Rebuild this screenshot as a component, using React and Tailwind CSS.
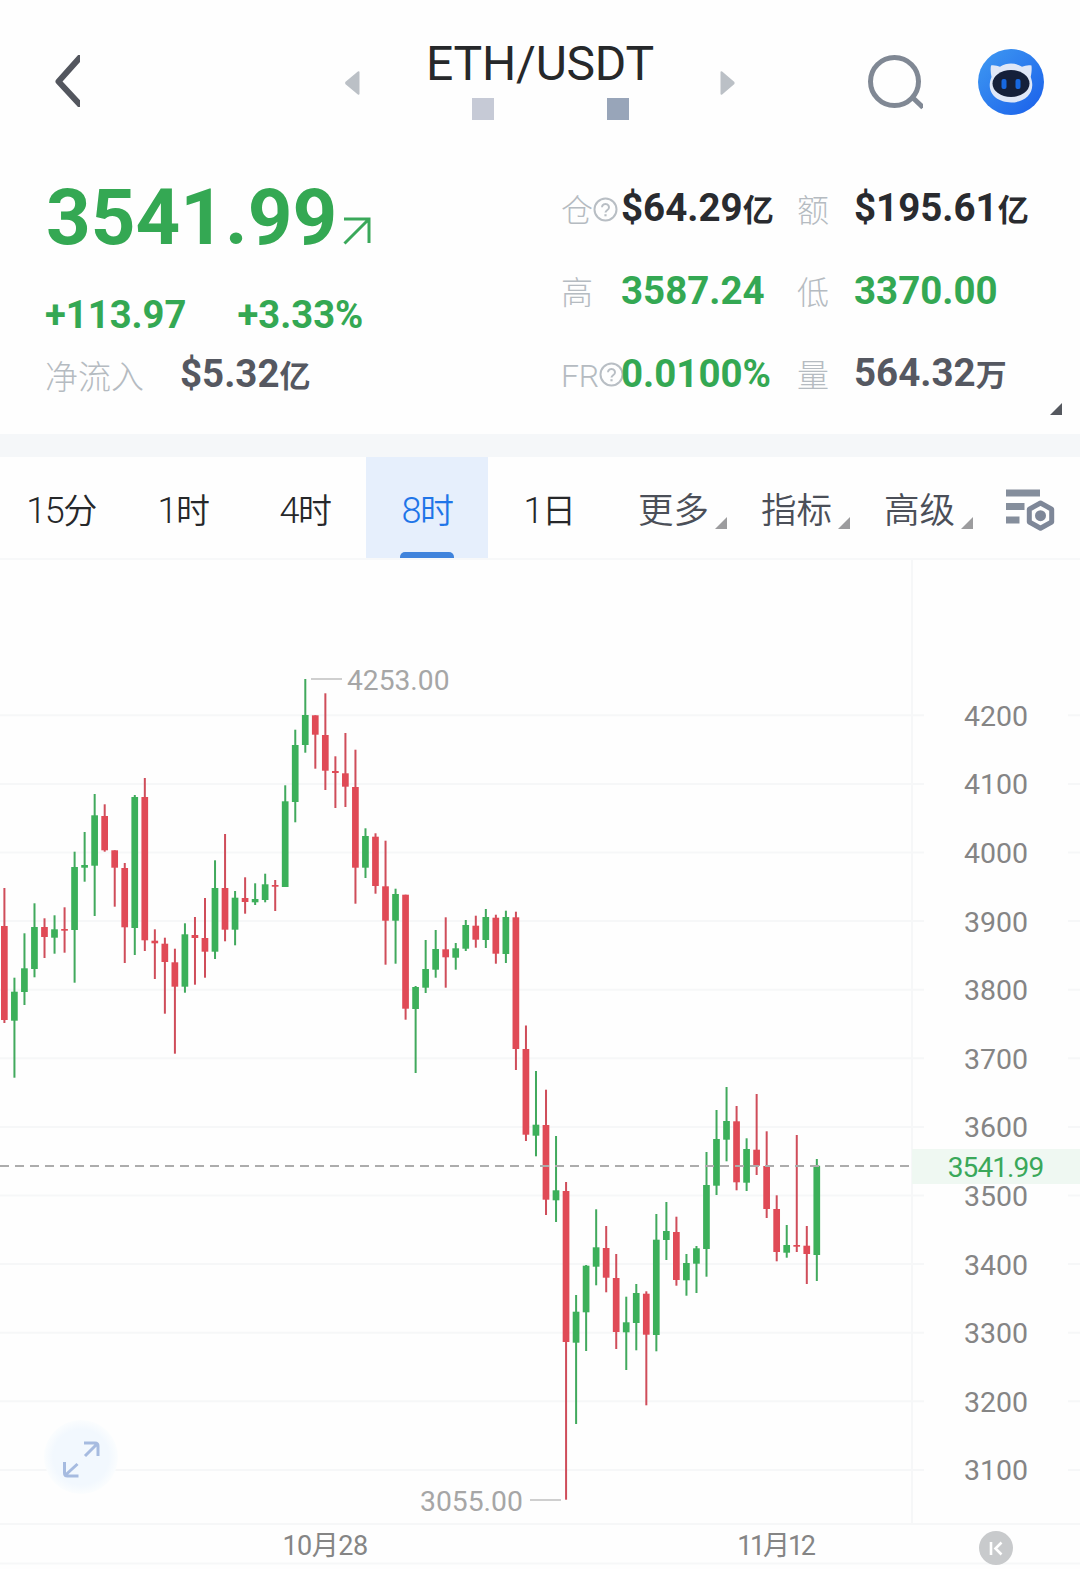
import React from "react";

const UP = "#3cb05a";
const DOWN = "#e04a56";
const STEP = 10.03;

// Each candle: [direction, high, body top, body bottom, low] as chart y values.
const CANDLES = [
  ["d", 888, 926, 1020, 1023], ["u", 977.7, 991.7, 1020.7, 1077.7], ["u", 933.3, 968.3, 992, 1005],
  ["u", 903.3, 927, 969, 977.3], ["d", 918.3, 927, 937, 958], ["u", 915.3, 929.3, 937.7, 953.7],
  ["d", 907.3, 929, 930.6, 952.7], ["u", 851.7, 867, 930, 982.7], ["u", 832, 865, 867.7, 881.7],
  ["u", 794, 815.3, 865.7, 916], ["d", 804.3, 816, 850.3, 851.7], ["d", 850.3, 850.3, 867.7, 906.7],
  ["d", 863, 868, 927.3, 963], ["u", 795, 797, 928, 955], ["d", 778, 797, 940.3, 951],
  ["d", 929.3, 940.7, 943.3, 979], ["d", 937.7, 943.7, 962, 1013.7], ["d", 948.7, 962.3, 986.7, 1053.7],
  ["u", 923.3, 934.3, 986.7, 992.7], ["d", 917, 935, 938, 984.7], ["d", 898, 938, 951.7, 977.7],
  ["u", 860.3, 888, 951.7, 959], ["d", 834, 888, 929.7, 941.3], ["u", 891, 897.7, 929.7, 945.3],
  ["d", 877.3, 898, 902, 913.7], ["u", 883.3, 899, 902.3, 905], ["u", 873.7, 884.3, 900, 902.3],
  ["d", 880, 885, 886.7, 911], ["u", 785.3, 801.3, 887, 887], ["u", 729.7, 745, 802, 822.3],
  ["u", 679, 715, 745, 752.7], ["d", 715.3, 715.3, 734.7, 768.7], ["d", 693.3, 735, 770.7, 790],
  ["d", 756.3, 771, 773, 808], ["d", 733, 773.3, 786.7, 807], ["d", 749.7, 787, 867.7, 903.7],
  ["u", 828.3, 836, 867.7, 878], ["d", 833.3, 836.7, 886, 893.7], ["d", 840.7, 886.3, 920.7, 964.7],
  ["u", 888.7, 894, 920.7, 963.7], ["d", 894.7, 894.7, 1008.7, 1019.7], ["u", 986, 987, 1009, 1073],
  ["u", 940, 969, 987.7, 993], ["u", 930, 949, 969.7, 977.7], ["d", 917.3, 949.3, 957.3, 987.7],
  ["u", 943, 948.3, 957.7, 969.7], ["u", 920, 925, 948.7, 951], ["d", 915.7, 925.7, 939.7, 947.7],
  ["u", 909, 917, 940, 948], ["d", 914.7, 917.7, 953.7, 963.7], ["u", 910.7, 917, 954, 963],
  ["d", 911.7, 917.3, 1049, 1070], ["d", 1025.5, 1049, 1134.7, 1141], ["u", 1071, 1124.7, 1135.7, 1156.3],
  ["d", 1089.7, 1125, 1199.7, 1215], ["u", 1136, 1190.3, 1200.3, 1222], ["d", 1182, 1191, 1342, 1499.7],
  ["u", 1295, 1311.7, 1342.7, 1424], ["u", 1265, 1265.7, 1312.3, 1351], ["u", 1209.3, 1247.3, 1266.7, 1285.3],
  ["d", 1226, 1248, 1277.7, 1292.3], ["d", 1254, 1278, 1332, 1349], ["u", 1296.7, 1322.3, 1332.3, 1370],
  ["u", 1284, 1293, 1323, 1350.3], ["d", 1291.3, 1293.7, 1334.7, 1405.3], ["u", 1214, 1239.7, 1335, 1351.3],
  ["u", 1202, 1231, 1240, 1260], ["d", 1216.7, 1232, 1280, 1285.7], ["u", 1254, 1263, 1280.3, 1295.7],
  ["u", 1246, 1248.3, 1263.7, 1293], ["u", 1152, 1185, 1249, 1276.7], ["u", 1110, 1139, 1185.7, 1195],
  ["u", 1087, 1121, 1139.7, 1161.3], ["d", 1106, 1121.3, 1182.3, 1190.3], ["u", 1138.3, 1149, 1182.7, 1191],
  ["d", 1094, 1149.7, 1165.7, 1175], ["d", 1131.3, 1166, 1209, 1218], ["d", 1195.3, 1209, 1252, 1261.3],
  ["u", 1225, 1245, 1252.7, 1257.7], ["d", 1135, 1245, 1246.5, 1252], ["d", 1226, 1245.7, 1254, 1284],
  ["u", 1159, 1165.7, 1255, 1281],
];

const LEVELS = [4200, 4100, 4000, 3900, 3800, 3700, 3600, 3500, 3400, 3300, 3200, 3100];

function Corner({ className }) {
  return (
    <svg width="12" height="12" viewBox="0 0 12 12" className={className}>
      <path d="M12 0V12H0Z" fill="currentColor" />
    </svg>
  );
}

function Help({ className }) {
  return (
    <svg width="25" height="25" viewBox="0 0 25 25" fill="none" stroke="#b8bec4" className={className}>
      <circle cx="12.5" cy="12.5" r="11" strokeWidth="2" />
      <path d="M9 10.2a3.5 3.3 0 1 1 5.4 2.8c-1.3.9-1.9 1.3-1.9 2.6" strokeWidth="2" />
      <path d="M12.5 17.2v2.1" strokeWidth="2.2" />
    </svg>
  );
}

function Header() {
  return (
    <header className="flex h-[165px] items-start">
      <svg width="25" height="52" viewBox="0 0 25 52" className="mt-[55px] ml-[55px] shrink-0">
        <path d="M28 -1L3.5 26.5L28 53" fill="none" stroke="#53565e" strokeWidth="6" strokeLinejoin="round" />
      </svg>
      <svg width="15" height="24" viewBox="0 0 15 24" className="mt-[71px] ml-[265px] shrink-0">
        <path d="M13.5 1.2V22.8L1.2 12.5V11.5Z" fill="#bbc0c6" stroke="#bbc0c6" strokeWidth="2" strokeLinejoin="round" />
      </svg>
      <div className="mt-[34px] ml-[60px] flex w-[240px] flex-col items-center">
        <h1 className="text-[48px] leading-[60px] font-normal tracking-[-0.2px] text-[#26282a]">ETH/USDT</h1>
        <div className="mt-1 ml-[21px] flex gap-[113px]">
          <span className="size-[22px] bg-[#c6cad6]" />
          <span className="size-[22px] bg-[#98a5b9]" />
        </div>
      </div>
      <svg width="15" height="24" viewBox="0 0 15 24" className="mt-[71px] ml-[60px] shrink-0">
        <path d="M1.5 1.2V22.8L13.5 12.5V11.5Z" fill="#bbc0c6" stroke="#bbc0c6" strokeWidth="2" strokeLinejoin="round" />
      </svg>
      <svg width="56" height="56" viewBox="0 0 56 56" fill="none" stroke="#808894" strokeWidth="5" className="mt-[54px] ml-[132px] shrink-0">
        <circle cx="27.5" cy="27.5" r="24" />
        <path d="M45 43L56 53.5" />
      </svg>
      <svg width="67" height="67" viewBox="0 0 67 67" className="mt-[49px] ml-[55px] shrink-0">
        <defs>
          <linearGradient id="badge" x1="0" y1="0" x2="1" y2="1">
            <stop offset="0" stopColor="#3f9af2" />
            <stop offset="1" stopColor="#1a5fea" />
          </linearGradient>
        </defs>
        <circle cx="33" cy="33" r="33" fill="url(#badge)" />
        <path d="M13 16.500c3.500-.5 6.500 .5 9 1.200 7-4.200 15-4.200 22 0 3-1 6-2 9.500-1.200 .5 5-.2 8.500-.8 11.500 6 16-6 25.500-19.700 25.500S7 44 13.500 28c-.8-4-1.200-7.500-.5-11.500Z" fill="#dfe7f7" />
        <ellipse cx="33" cy="34.500" rx="18.500" ry="13.500" fill="#15203a" />
        <rect x="23.500" y="30" width="5" height="10" rx="2" fill="#1768e0" />
        <rect x="37.500" y="30" width="5" height="10" rx="2" fill="#1768e0" />
      </svg>
    </header>
  );
}

function Label({ children, help, tight }) {
  return (
    <div className="flex items-center text-[32px] leading-[48px] font-light text-[#b5bbc1]">
      <span className={tight ? "mt-[3px] tracking-[-0.3px]" : "mt-[3px]"}>{children}</span>
      {help && <Help className="shrink-0" />}
    </div>
  );
}

function Value({ children, unit, className }) {
  return (
    <div className={"text-[38.500px] leading-[48px] font-bold whitespace-nowrap " + className}>
      {children}
      {unit && <span className="text-[31px]">{unit}</span>}
    </div>
  );
}

function Summary() {
  return (
    <section className="flex h-[269px] pl-[45px] text-[#34a853]">
      <div className="w-[516px]">
        <div className="flex items-start pt-[7px]">
          <span className="ml-px text-[78px] leading-[92px] font-bold">3541.99</span>
          <svg width="28" height="29" viewBox="0 0 28 29" fill="none" stroke="#3aa85a" strokeWidth="3" className="mt-[44px] ml-[6px]">
            <path d="M1 3H26V27M26 3L1.500 27.500" />
          </svg>
        </div>
        <div className="mt-[27px] flex gap-[51px] text-[38.200px] leading-[48px] font-bold">
          <span>+113.97</span>
          <span>+3.33%</span>
        </div>
        <div className="mt-[11px] flex items-center">
          <span className="w-[135px] pt-[3px] text-[33px] leading-[43px] font-light text-[#b5bbc1]">净流入</span>
          <Value unit="亿" className="text-[#555861]">$5.32</Value>
        </div>
      </div>
      <div>
        <div className="grid grid-cols-[60px_176px_57px_190px] grid-rows-[48px_48px_48px] items-center gap-y-[34.500px] pt-[20px]">
          <Label help>仓</Label>
          <Value unit="亿" className="pt-px text-[#292b2f]">$64.29</Value>
          <Label>额</Label>
          <Value unit="亿" className="pt-px text-[#292b2f]">$195.61</Value>
          <Label>高</Label>
          <Value className="-mt-px">3587.24</Value>
          <Label>低</Label>
          <Value className="-mt-px">3370.00</Value>
          <Label help tight>FR</Label>
          <Value className="">0.0100%</Value>
          <Label>量</Label>
          <Value unit="万" className="pt-px text-[#555861]">564.32</Value>
        </div>
        <Corner className="mt-[5px] ml-[489px] text-[#55585f]" />
      </div>
    </section>
  );
}

function Tabs() {
  const frames = [["15", "分"], ["1", "时"], ["4", "时"], ["8", "时"], ["1", "日"]];
  return (
    <nav className="flex h-[103px] border-b-2 border-[#f7f8f9] text-[#26282a]">
      {frames.map(([n, unit]) => {
        const active = n === "8";
        return (
          <button
            key={n + unit}
            className={
              "flex w-[122px] flex-col items-center justify-between " +
              (active ? "bg-[#e6effc] text-[#1f75e8]" : "")
            }
          >
            <span className="pt-[30px] text-[36px] leading-[48px] font-[350] tracking-[-1.500px]">
              {n}
              <span className="text-[34px]">{unit}</span>
            </span>
            {active && <span className="h-[6px] w-[54px] rounded-t-[5px] bg-[#3f83dc]" />}
          </button>
        );
      })}
      {["更多", "指标", "高级"].map((name) => (
        <button key={name} className="flex w-[123px] items-start pt-[30px] pl-[28px] text-[#4b4f58]">
          <span className="text-[35.500px] leading-[48px] font-[350]">{name}</span>
          <Corner className="mt-[30px] ml-[6px] text-[#9c9c9e]" />
        </button>
      ))}
      <svg width="50" height="42" viewBox="0 0 50 42" className="mt-[32px] ml-[27px]">
        <path d="M0 0.500H34V7.500H0ZM0 14H18.500V21H0ZM0 27.500H13.500V34.500H0Z" fill="#858e9c" />
        <path d="M34.500 14L45.700 20.200V33L34.500 39.200L23.300 33V20.200Z" fill="#fefefe" stroke="#7e8798" strokeWidth="5" strokeLinejoin="round" />
        <circle cx="34.500" cy="26.700" r="5.500" fill="#7e8798" />
      </svg>
    </nav>
  );
}

function Chart() {
  return (
    <svg width="1080" height="1009" viewBox="0 560 1080 1009" className="block" fontSize="28">
      <defs>
        <radialGradient id="halo">
          <stop offset="0.75" stopColor="#f2f8fe" />
          <stop offset="1" stopColor="#fbfdfe" />
        </radialGradient>
      </defs>
      <g stroke="#f6f7f8" strokeWidth="2">
        {LEVELS.map((v) => {
          const y = 715.3 + ((4200 - v) / 100) * 68.600;
          return <path key={v} d={`M0 ${y}H924M1068 ${y}H1080`} />;
        })}
        <path d="M912 560V1524M0 1524H1080M0 1563.500H1080" />
      </g>

      <circle cx="81" cy="1457" r="37" fill="url(#halo)" />
      <path d="M84 1443H95Q98 1443 98 1446V1456M97 1444L85 1456M64.500 1462V1473Q64.500 1476 67.500 1476H78.500M65.500 1475L77.500 1464" fill="none" stroke="#a6bbe0" strokeWidth="3" />

      {CANDLES.map(([dir, high, top, bottom, low], i) => {
        const x = 4.4 + i * STEP;
        return (
          <g key={i} fill={dir === "u" ? UP : DOWN}>
            <rect x={x - 1} y={high} width="2" height={low - high} fill={dir === "u" ? "#41a95d" : "#cf4d5a"} />
            <rect x={x - 3.4} y={top} width="6.7" height={Math.max(bottom - top, 1.7)} />
          </g>
        );
      })}

      <path d="M0 1166H910" stroke="#acacac" strokeWidth="2" strokeDasharray="9 6" />

      <g fill="#a6a6a6" stroke="none">
        <rect x="311" y="678" width="31" height="2" fill="#cfcfcf" />
        <text x="347" y="690" fontSize="28.200">4253.00</text>
        <rect x="530" y="1499" width="31" height="2" fill="#cfcfcf" />
        <text x="420" y="1511" fontSize="28.300">3055.00</text>
      </g>

      <g fill="#858585" textAnchor="middle">
        <rect x="912" y="1149" width="168" height="35" fill="#eff8f2" />
        {LEVELS.map((v) => (
          <text key={v} x="996" y={725.700 + ((4200 - v) / 100) * 68.600} fontSize="28.500">{v}</text>
        ))}
        <text x="995.500" y="1177" letterSpacing="-0.9" fill="#3aa85a">3541.99</text>
        <text x="325" y="1555" fontSize="27" letterSpacing="-0.5">10月28</text>
        <text x="775.500" y="1555" fontSize="27" letterSpacing="-2.200">11月12</text>
      </g>

      <circle cx="996" cy="1548" r="17" fill="#c8cacc" />
      <path d="M991 1542V1555M1001.500 1542.500L995.500 1548.500L1001.500 1554.500" fill="none" stroke="#fff" strokeWidth="2.600" />
    </svg>
  );
}

export default function App() {
  return (
    <main className="h-[1569px] w-[1080px] overflow-hidden bg-[#fefefe] font-['Roboto','Noto_Sans_CJK_SC',sans-serif]">
      <Header />
      <Summary />
      <div className="h-[23px] bg-[#f5f7f9]" />
      <Tabs />
      <Chart />
    </main>
  );
}
